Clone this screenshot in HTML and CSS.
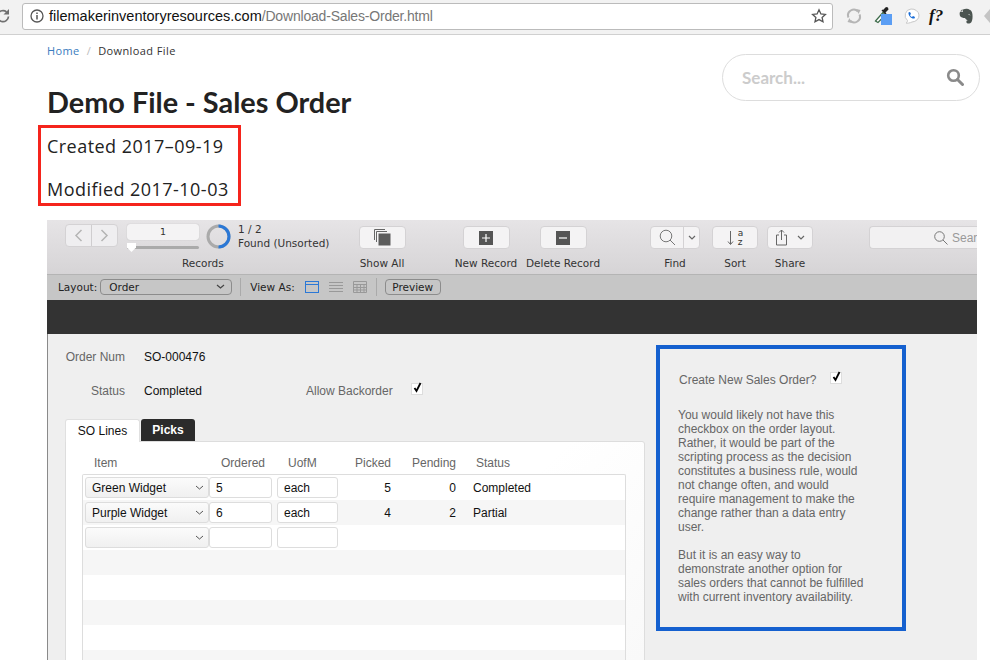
FILE: index.html
```html
<!DOCTYPE html>
<html>
<head>
  <meta charset="utf-8">
  <meta name="viewport" content="width=device-width">
  <title>Demo File - Sales Order</title>
  <link rel="stylesheet" href="styles.css">
</head>
<body>

<!-- browser chrome -->
<div class="chrome">
  <svg class="reload" width="12" height="16" viewBox="0 0 12 16"><path d="M8.5 8.500a5.500 5.500 0 1 1-2-4.600" fill="none" stroke="#707070" stroke-width="1.700"/><path d="M9 1v5.500H3.500z" fill="#707070"/></svg>
  <div class="address">
    <svg width="14" height="14" viewBox="0 0 14 14"><circle cx="7" cy="7" r="6" fill="none" stroke="#555" stroke-width="1.300"/><path d="M7 6v4.500M7 3.400v1.500" stroke="#555" stroke-width="1.500"/></svg>
    <span class="host">filemakerinventoryresources.com</span><span class="path">/Download-Sales-Order.html</span>
    <svg class="star" width="16" height="16" viewBox="0 0 16 16"><path d="M8 1.800l1.900 4.100 4.500.5-3.300 3 .9 4.400L8 11.600l-4 2.200.9-4.400-3.300-3 4.500-.5z" fill="none" stroke="#555" stroke-width="1.300"/></svg>
  </div>
  <div class="extensions">
    <svg class="ext-sync" width="16" height="16" viewBox="0 0 16 16"><path d="M2.500 9.500A5.700 5.700 0 0 1 12 3.500M13.500 6.500A5.700 5.700 0 0 1 4 12.500" fill="none" stroke="#b5b5b5" stroke-width="2"/><path d="M10.500 1l4 1-2 4zM5.500 15l-4-1 2-4z" fill="#b5b5b5"/></svg>
    <svg class="ext-dropper" width="20" height="20" viewBox="0 0 20 20"><path d="M1.500 15L9 6.500l2.500 2.500L4 16.500z" fill="#fff" stroke="#3d6b4a" stroke-width="1.200"/><path d="M9 4l3-3 2 .5.500 2-3 3 1 1-1 1-4-4 1-1z" fill="#222"/><rect x="7" y="8" width="11" height="11" fill="#5b9ef4"/></svg>
    <svg class="ext-chat" width="18" height="16" viewBox="0 0 18 16"><path d="M9 1a7.500 6.500 0 0 1 1 13c-2 1-5 1.500-6 1 1-.5 1.500-1.500 1.500-2.500A6.500 6.500 0 0 1 9 1z" fill="#fff" stroke="#c8c8c8"/><path d="M6.500 4.500l1.500-.5 1 2-1 1c.4 1 1 1.600 2 2l1-1 2 1-.5 1.500c-3 .7-6.500-3-6-6z" fill="#1a6ed8"/></svg>
    <span class="ext-font">f?</span>
    <svg class="ext-note" width="14" height="16" viewBox="0 0 14 16"><path d="M4 1.500C6 .5 9 .6 10 1.400c2 .4 3 2 3.400 4.600.4 3 .1 6-.9 8-1.500 2-4.500 2-5 .5-.5-1.500.5-2.500 2-2-2-.5-3-1.500-3.500-2.500-2 0-4-.5-5-2-.5-2-.5-3 0-4h3z" fill="#4b5450"/><path d="M9.500 6.500c.8-.3 1.300.1 1.500.8" fill="none" stroke="#c5c9c7" stroke-width=".9"/><path d="M1 3.500L3.500 1v2.500z" fill="#6a716d"/></svg>
    <span class="ext-cut"></span>
  </div>
</div>

<!-- page header -->
<div class="page-head">
  <div class="page-title">
    <div class="crumbs"><a class="crumb-link">Home</a><span class="crumb-sep">/</span>Download File</div>
    <h1>Demo File - Sales Order</h1>
    <div class="dates">
      <p>Created 2017–09-19</p>
      <p>Modified 2017-10-03</p>
    </div>
  </div>
  <div class="site-search">
    <span>Search...</span>
    <svg width="18" height="18" viewBox="0 0 18 18"><circle cx="7.500" cy="7.500" r="5.300" fill="none" stroke="#8a8a8a" stroke-width="2.600"/><path d="M11.500 11.500l5 5" stroke="#8a8a8a" stroke-width="3" stroke-linecap="round"/></svg>
  </div>
</div>

<!-- filemaker window -->
<div class="fm">
  <div class="toolbar">
    <div class="tool tool-records">
      <div class="records-top">
        <div class="pager">
          <span class="pager-btn"><svg width="9" height="13" viewBox="0 0 9 13"><path d="M7.500 1L2 6.500 7.500 12" fill="none" stroke="#b4b4b4" stroke-width="1.500"/></svg></span>
          <span class="pager-btn"><svg width="9" height="13" viewBox="0 0 9 13"><path d="M1.500 1L7 6.500 1.500 12" fill="none" stroke="#b4b4b4" stroke-width="1.500"/></svg></span>
        </div>
        <div class="rec-slider">
          <div class="rec-num">1</div>
          <div class="rec-track"><span class="rec-thumb"></span></div>
        </div>
        <svg class="ring" width="25" height="25" viewBox="0 0 25 25"><circle cx="12.500" cy="12.500" r="10.500" fill="none" stroke="#aaa" stroke-width="3"/><path d="M12.500 2a10.500 10.500 0 0 1 0 21" fill="none" stroke="#2b78d6" stroke-width="3"/></svg>
        <div class="found">1 / 2<br>Found (Unsorted)</div>
      </div>
      <div class="tool-label records-label">Records</div>
    </div>

    <div class="tool tool-showall">
      <div class="tool-btn btn-wide"><svg width="17" height="17" viewBox="0 0 17 17"><path d="M.5 11V.5H11M2.500 13V2.500H13" fill="none" stroke="#666"/><rect x="4.500" y="4.500" width="12" height="12" fill="#5c5c5c"/></svg></div>
      <div class="tool-label">Show All</div>
    </div>
    <div class="tool tool-new">
      <div class="tool-btn btn-wide"><svg width="14" height="14" viewBox="0 0 14 14"><rect width="14" height="14" fill="#555"/><path d="M7 3v8M3 7h8" stroke="#fff" stroke-width="1.200"/></svg></div>
      <div class="tool-label">New Record</div>
    </div>
    <div class="tool tool-delete">
      <div class="tool-btn btn-wide"><svg width="14" height="14" viewBox="0 0 14 14"><rect width="14" height="14" fill="#555"/><path d="M3 7h8" stroke="#fff" stroke-width="1.200"/></svg></div>
      <div class="tool-label">Delete Record</div>
    </div>
    <div class="tool tool-find">
      <div class="tool-btn btn-find">
        <span class="find-main"><svg width="17" height="17" viewBox="0 0 17 17"><circle cx="7" cy="7" r="5.800" fill="none" stroke="#777"/><path d="M11 11l5 5" stroke="#777"/></svg></span>
        <span class="find-more"><svg width="8" height="5" viewBox="0 0 8 5"><path d="M1 1l3 3 3-3" fill="none" stroke="#666" stroke-width="1.200"/></svg></span>
      </div>
      <div class="tool-label">Find</div>
    </div>
    <div class="tool tool-sort">
      <div class="tool-btn btn-sort"><svg width="7" height="16" viewBox="0 0 7 16"><path d="M3.500 1v13M1 11.500L3.500 14.500 6 11.500" fill="none" stroke="#666"/></svg><span class="sort-az">a<br>z</span></div>
      <div class="tool-label">Sort</div>
    </div>
    <div class="tool tool-share">
      <div class="tool-btn btn-share">
        <svg width="13" height="17" viewBox="0 0 13 17"><path d="M4 6H1.500v10h10V6H9M6.500 11V1M4 3.500L6.500 1 9 3.500" fill="none" stroke="#666"/></svg>
        <svg width="8" height="5" viewBox="0 0 8 5"><path d="M1 1l3 3 3-3" fill="none" stroke="#666" stroke-width="1.200"/></svg>
      </div>
      <div class="tool-label">Share</div>
    </div>
    <div class="quick-search">
      <svg width="14" height="14" viewBox="0 0 14 14"><circle cx="5.500" cy="5.500" r="4.800" fill="none" stroke="#777"/><path d="M9 9l4.500 4.500" stroke="#777"/></svg>
      <span>Sear</span>
    </div>
  </div>

  <div class="layoutbar">
    <span>Layout:</span>
    <div class="layout-select">Order<svg width="9" height="5" viewBox="0 0 9 5"><path d="M1 1l3.500 3L8 1" fill="none" stroke="#444" stroke-width="1.200"/></svg></div>
    <span class="bar-div"></span>
    <span>View As:</span>
    <svg class="view-ico" width="14" height="12" viewBox="0 0 14 12"><rect x=".5" y=".5" width="13" height="11" fill="none" stroke="#2b78d6"/><path d="M.5 3.500h13" stroke="#2b78d6"/></svg>
    <svg class="view-ico" width="14" height="12" viewBox="0 0 14 12"><path d="M0 1.500h14M0 4.500h14M0 7.500h14M0 10.500h14" stroke="#999"/></svg>
    <svg class="view-ico" width="14" height="12" viewBox="0 0 14 12"><path d="M.5.500h13v11H.5zM.5 3.500h13M.5 6.500h13M.5 9h13M4 3.500v8M7.500 3.500v8M11 3.500v8" fill="none" stroke="#999"/></svg>
    <span class="bar-div bar-div2"></span>
    <div class="preview-btn">Preview</div>
  </div>

  <div class="headerband"></div>

  <div class="fm-body">
    <div class="order">
      <div class="field-row">
        <span class="field-label">Order Num</span>
        <span class="field-value">SO-000476</span>
      </div>
      <div class="field-row">
        <span class="field-label">Status</span>
        <span class="field-value">Completed</span>
        <span class="backorder">Allow Backorder</span>
        <span class="check"><svg width="11" height="13" viewBox="0 0 11 13"><path d="M2.500 7l2 3 4-8" fill="none" stroke="#000" stroke-width="1.800"/></svg></span>
      </div>

      <div class="tabs">
        <div class="tab tab-on">SO Lines</div>
        <div class="tab tab-off">Picks</div>
      </div>
      <div class="tab-panel">
        <div class="line-grid line-head">
          <span class="h-item">Item</span>
          <span class="h-ordered">Ordered</span>
          <span class="h-uofm">UofM</span>
          <span class="num">Picked</span>
          <span class="num">Pending</span>
          <span class="h-status">Status</span>
        </div>
        <div class="portal">
          <div class="line-grid portal-row">
            <div class="dd">Green Widget<svg width="9" height="5" viewBox="0 0 9 5"><path d="M1 1l3.500 3L8 1" fill="none" stroke="#555"/></svg></div>
            <div class="inp inp-qty">5</div>
            <div class="inp">each</div>
            <span class="num">5</span>
            <span class="num">0</span>
            <span class="line-status">Completed</span>
          </div>
          <div class="line-grid portal-row">
            <div class="dd">Purple Widget<svg width="9" height="5" viewBox="0 0 9 5"><path d="M1 1l3.500 3L8 1" fill="none" stroke="#555"/></svg></div>
            <div class="inp inp-qty">6</div>
            <div class="inp">each</div>
            <span class="num">4</span>
            <span class="num">2</span>
            <span class="line-status">Partial</span>
          </div>
          <div class="line-grid portal-row">
            <div class="dd"><svg width="9" height="5" viewBox="0 0 9 5"><path d="M1 1l3.500 3L8 1" fill="none" stroke="#555"/></svg></div>
            <div class="inp inp-qty"></div>
            <div class="inp"></div>
          </div>
          <div class="portal-row"></div>
          <div class="portal-row"></div>
          <div class="portal-row"></div>
          <div class="portal-row"></div>
          <div class="portal-row"></div>
        </div>
      </div>
    </div>

    <div class="note">
      <div class="note-head">
        <span>Create New Sales Order?</span>
        <span class="check"><svg width="11" height="13" viewBox="0 0 11 13"><path d="M2.500 7l2 3 4-8" fill="none" stroke="#000" stroke-width="1.800"/></svg></span>
      </div>
      <p>You would likely not have this checkbox on the order layout. Rather, it would be part of the scripting process as the decision constitutes a business rule, would not change often, and would require management to make the change rather than a data entry user.</p>
      <p>But it is an easy way to demonstrate another option for sales orders that cannot be fulfilled with current inventory availability.</p>
    </div>
  </div>
</div>

</body>
</html>
```

FILE: styles.css
```css
html, body {
  margin: 0;
  padding: 0;
  background: #fff;
  overflow: hidden;
}
body {
  height: 660px;
  font-family: "Liberation Sans", Arial, sans-serif;
}

/* browser chrome */
.chrome {
  display: flex;
  align-items: center;
  height: 35px;
  box-sizing: border-box;
  padding-bottom: 2px;
  background: #f2f2f2;
  border-bottom: 1px solid #d0d0d0;
}
.reload {
  width: 12px;
  flex: none;
}
.address {
  display: flex;
  align-items: center;
  width: 813px;
  height: 27px;
  box-sizing: border-box;
  margin-left: 10px;
  padding: 0 5px 0 7px;
  background: #fff;
  border: 1px solid #bbb;
  border-radius: 3px;
}
.address .host {
  margin-left: 5px;
  font-size: 14.5px;
  color: #111;
}
.address .path {
  font-size: 14px;
  letter-spacing: -.19px;
  color: #777;
}
.star {
  margin-left: auto;
}
.extensions {
  display: flex;
  align-items: center;
  flex: 1;
  padding-left: 13px;
}
.ext-sync { margin-right: 11px; }
.ext-dropper { margin: 0 8px 0 1px; }
.ext-chat { margin-right: 9px; }
.ext-font {
  width: 20px;
  margin-right: 10px;
  font: italic bold 17px "Liberation Serif", serif;
  color: #111;
}
.ext-note { margin-right: 11px; }
.ext-cut {
  width: 6px;
  height: 14px;
  background: #c4c4c4;
  clip-path: polygon(100% 0, 0 50%, 100% 100%);
}

/* page header */
.page-head {
  display: flex;
  justify-content: space-between;
  height: 185px;
  padding: 0 10px 0 47px;
}
.crumbs {
  padding-top: 8px;
  font: 11px/15px "Open Sans", sans-serif;
  letter-spacing: .4px;
  color: #333;
}
.crumb-link { color: #3a7cc0; }
.crumb-sep {
  margin: 0 7px;
  color: #bbb;
}
h1 {
  margin: 26px 0 0;
  font: 700 28.85px/36px Lato, sans-serif;
  color: #222;
}
.dates {
  width: 191px;
  height: 75px;
  margin: 5px 0 0 -9px;
  padding-left: 6px;
  border: 3px solid #f5241c;
  font: 18px/43px "Open Sans", sans-serif;
  letter-spacing: .46px;
  color: #222;
}
.dates p {
  margin: 0;
  height: 43px;
  position: relative;
  top: -3px;
}
.site-search {
  display: flex;
  align-items: center;
  justify-content: space-between;
  width: 258px;
  height: 47px;
  box-sizing: border-box;
  margin-top: 19px;
  padding: 0 15px 1px 19px;
  border: 1px solid #ddd;
  border-radius: 24px;
  font: 700 17px Lato, sans-serif;
  color: #ccc;
}

/* filemaker window */
.fm {
  width: 930px;
  height: 440px;
  overflow: hidden;
  margin-left: 47px;
  font-size: 12px;
}
.toolbar {
  display: flex;
  height: 55px;
  box-sizing: border-box;
  padding: 4px 0 0 18px;
  background: linear-gradient(#e6e4e6, #d6d4d6);
  border-bottom: 1px solid #b4b4b4;
  font: 10.5px "DejaVu Sans", sans-serif;
  color: #333;
}
.tool {
  display: flex;
  flex-direction: column;
  align-items: center;
}
.tool-label {
  margin-top: 7px;
  line-height: 14px;
  white-space: nowrap;
}
.tool-records {
  width: 266px;
  align-items: flex-start;
}
.records-top {
  display: flex;
  height: 28px;
}
.records-label {
  margin: 4px 0 0 117px;
}
.pager {
  display: flex;
  width: 53px;
  height: 23px;
  box-sizing: border-box;
  background: #efeef0;
  border: 1px solid #d4d2d4;
  border-radius: 4px;
}
.pager-btn {
  display: flex;
  flex: 1;
  align-items: center;
  justify-content: center;
}
.pager-btn + .pager-btn {
  border-left: 1px solid #cfcdcf;
}
.rec-slider {
  width: 72px;
  margin-left: 9px;
}
.rec-num {
  height: 16px;
  background: #f4f3f4;
  border-radius: 3px;
  box-shadow: 0 0 1px #aaa;
  text-align: center;
  font-size: 9.5px;
  line-height: 16px;
}
.rec-track {
  position: relative;
  height: 3px;
  margin-top: 6px;
  background: #aaa;
  border-radius: 2px;
}
.rec-thumb {
  position: absolute;
  left: 0;
  top: -3px;
  width: 9px;
  height: 9px;
  background: #fff;
  clip-path: polygon(0 0, 100% 0, 100% 50%, 50% 100%, 0 50%);
}
.ring {
  margin: 0 0 0 7px;
}
.found {
  margin: -2px 0 0 7px;
  line-height: 14px;
  white-space: nowrap;
}
.tool-btn {
  display: flex;
  align-items: center;
  justify-content: center;
  height: 23px;
  box-sizing: border-box;
  margin-top: 2px;
  background: #f4f3f4;
  border: 1px solid #d4d2d4;
  border-radius: 4px;
}
.btn-wide { width: 47px; }
.tool-showall { width: 60px; margin-left: 21px; }
.tool-new { width: 64px; margin-left: 42px; }
.tool-delete { width: 76px; margin-left: 7px; }
.tool-find { width: 50px; margin-left: 49px; }
.tool-sort { width: 46px; margin-left: 12px; }
.tool-share { width: 46px; margin-left: 9px; }
.btn-find { width: 50px; }
.find-main {
  display: flex;
  align-items: center;
  justify-content: center;
  width: 32px;
  height: 100%;
  border-right: 1px solid #d4d2d4;
}
.find-more {
  flex: 1;
  text-align: center;
  line-height: 0;
}
.btn-sort { width: 46px; }
.sort-az {
  margin-left: 4px;
  font-size: 9px;
  line-height: 9px;
}
.btn-share {
  width: 46px;
  gap: 9px;
}
.quick-search {
  display: flex;
  align-items: center;
  gap: 4px;
  width: 108px;
  height: 23px;
  box-sizing: border-box;
  margin: 2px 0 0 56px;
  padding-left: 64px;
  background: #f2f1f2;
  border-radius: 4px 0 0 4px;
  border: 1px solid #d4d2d4;
  border-right: 0;
  color: #999;
  font: 12px "Liberation Sans", sans-serif;
}
.quick-search svg { flex: none; }

.layoutbar {
  display: flex;
  align-items: center;
  height: 25px;
  box-sizing: border-box;
  padding: 0 0 2px 11px;
  background: #c6c6c6;
  font: 10.5px "DejaVu Sans", sans-serif;
  color: #222;
}
.layout-select {
  display: flex;
  align-items: center;
  justify-content: space-between;
  width: 132px;
  height: 16px;
  box-sizing: border-box;
  margin-left: 3px;
  padding: 0 6px 0 8px;
  border: 1px solid #8c8c8c;
  border-radius: 4px;
}
.bar-div {
  width: 1px;
  height: 18px;
  margin: 0 9px 0 8px;
  background: #aaa;
}
.view-ico { margin-left: 10px; }
.bar-div2 { margin: 0 8px 0 9px; }
.preview-btn {
  height: 16px;
  box-sizing: border-box;
  width: 56px;
  border: 1px solid #8c8c8c;
  border-radius: 4px;
  text-align: center;
  line-height: 14px;
}
.headerband {
  height: 34px;
  background: #333;
}

.fm-body {
  display: flex;
  height: 326px;
  background: #efefef;
  border-left: 1px solid #8a8a8a;
  color: #111;
}
.order {
  width: 597px;
  flex: none;
  box-sizing: border-box;
  padding: 6px 0 0 17px;
}
.field-row {
  display: flex;
  align-items: center;
  height: 34px;
}
.field-label {
  width: 60px;
  text-align: right;
  color: #666;
  white-space: nowrap;
}
.field-value {
  width: 162px;
  margin-left: 19px;
}
.backorder {
  width: 105px;
  color: #666;
}
.check {
  display: block;
  width: 10px;
  height: 10px;
  background: #fff;
  border: 1px solid #ddd;
  position: relative;
  top: -2px;
}
.check svg {
  display: block;
  margin-top: -3px;
}
.tabs {
  display: flex;
  margin-top: 11px;
  height: 22px;
}
.tab {
  box-sizing: border-box;
  height: 22px;
  line-height: 23px;
  text-align: center;
  border-radius: 3px 3px 0 0;
}
.tab-on {
  position: relative;
  width: 75px;
  height: 23px;
  background: #fff;
  border: 1px solid #e0e0e0;
  border-bottom: 0;
}
.tab-off {
  width: 54px;
  margin-left: 1px;
  background: #2b2b2b;
  color: #fff;
  font-weight: bold;
}
.tab-panel {
  height: 260px;
  padding: 0 18px 0 16px;
  background: linear-gradient(135deg, #fff 60%, #f8f8f8);
  border: 1px solid #ddd;
  border-radius: 0 3px 0 0;
}
.line-grid {
  display: grid;
  grid-template-columns: 124px 68px 61px 53px 65px 1fr;
  align-items: center;
}
.line-head {
  height: 32px;
  padding: 10px 0 0 3px;
  box-sizing: border-box;
  color: #666;
}
.line-head span { white-space: nowrap; }
.h-item { padding-left: 9px; }
.h-ordered { padding-left: 12px; }
.h-uofm { padding-left: 11px; }
.h-status { padding-left: 20px; }
.num { text-align: right; }
.portal {
  background: #fff;
  border: 1px solid #ddd;
  border-bottom: 0;
  border-radius: 2px 2px 0 0;
}
.portal-row {
  height: 25px;
  box-sizing: border-box;
  padding-left: 2px;
}
.portal-row:nth-child(even) { background: #f6f6f6; }
.dd {
  display: flex;
  align-items: center;
  justify-content: space-between;
  height: 21px;
  box-sizing: border-box;
  padding: 0 4px 0 6px;
  background: linear-gradient(#fbfbfb, #f0f0f0);
  border: 1px solid #ddd;
  border-radius: 3px;
}
.dd svg { margin-left: auto; }
.inp {
  height: 21px;
  box-sizing: border-box;
  padding-left: 6px;
  background: #fff;
  border: 1px solid #ddd;
  border-radius: 3px;
  line-height: 21px;
}
.inp-qty { width: 63px; }
.line-status { padding-left: 17px; }

.note {
  width: 250px;
  height: 286px;
  box-sizing: border-box;
  margin: 11px 0 0 11px;
  padding: 22px 0 0 18px;
  border: 4px solid #1560cf;
  font-size: 12px;
  line-height: 14px;
  color: #666;
}
.note-head {
  display: flex;
  align-items: center;
  gap: 14px;
  height: 18px;
  padding-left: 1px;
  margin-bottom: 19px;
}
.note p {
  width: 187px;
  margin: 0 0 14px;
}
```
